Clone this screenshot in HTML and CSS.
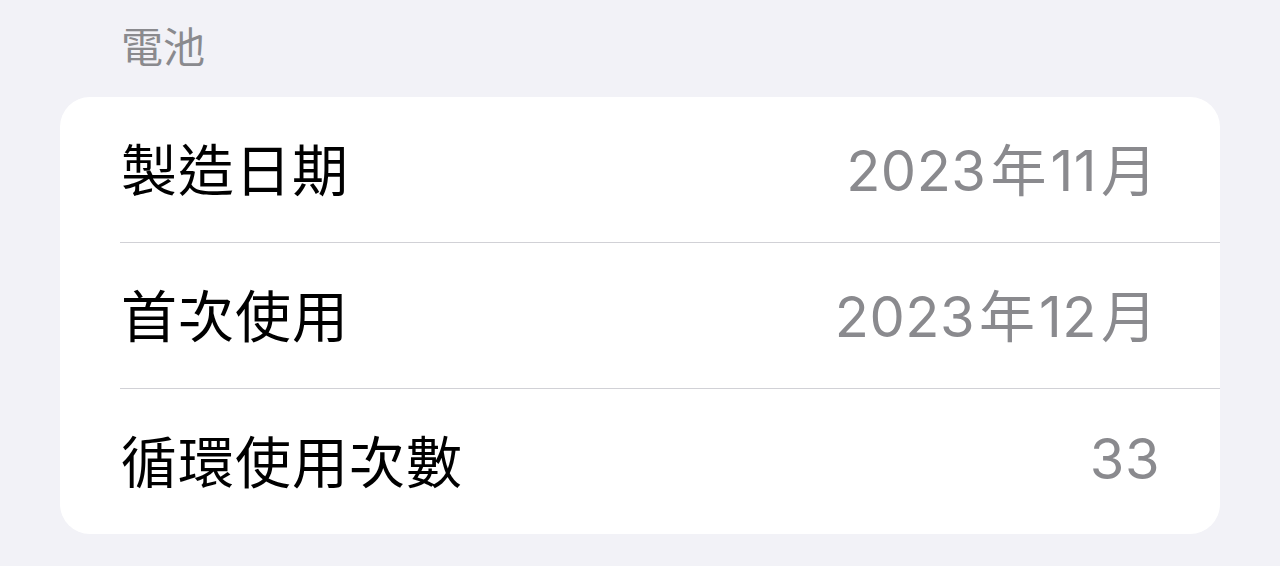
FILE: index.html
```html
<!DOCTYPE html>
<html lang="zh-Hant">
<head>
    <meta charset="UTF-8">
    <meta name="viewport" content="width=device-width, initial-scale=1.0">
    <title>電池</title>
    <link rel="stylesheet" href="styles.css">
</head>
<body>
    <!-- Battery section -->
    <section class="group">
        <div class="group-header">電池</div>
        <div class="card">
            <div class="row">
                <span class="label">製造日期</span>
                <span class="value">2023<span class="cjk">年</span>11<span class="cjk">月</span></span>
            </div>
            <div class="row">
                <span class="label">首次使用</span>
                <span class="value">2023<span class="cjk">年</span>12<span class="cjk">月</span></span>
            </div>
            <div class="row">
                <span class="label">循環使用次數</span>
                <span class="value">33</span>
            </div>
        </div>
    </section>
</body>
</html>
```

FILE: styles.css
```css
* {
    margin: 0;
    padding: 0;
    box-sizing: border-box;
}
body {
    background: #f2f2f7;
    font-family: "Noto Sans CJK TC", "Noto Sans", sans-serif;
    color: #000;
}
.group {
    padding: 19px 60px 0 60px;
}
.group-header {
    font-size: 42px;
    line-height: 52px;
    color: #8a8a8e;
    padding-left: 61px;
    margin-bottom: 26px;
}
/* Inset grouped card */
.card {
    background: #fff;
    border-radius: 30px;
    overflow: hidden;
}
.row {
    display: flex;
    justify-content: space-between;
    align-items: center;
    height: 146px;
    margin-left: 60px;
    padding-left: 1px;
    padding-right: 63px;
    padding-bottom: 6px;
    border-bottom: 1px solid #d1d1d6;
}
.row:last-child {
    height: 145px;
    border-bottom: none;
    padding-right: 60px;
}
.label {
    font-size: 56px;
    letter-spacing: 1px;
}
.value {
    font-family: "Inter", "Noto Sans CJK TC", sans-serif;
    font-size: 56px;
    color: #8a8a8e;
    letter-spacing: 0.5px;
}
.value .cjk {
    font-family: "Noto Sans CJK TC", sans-serif;
    margin: 0 4px;
    letter-spacing: 0;
}
.value .cjk:last-child {
    margin-right: 0;
}
```
